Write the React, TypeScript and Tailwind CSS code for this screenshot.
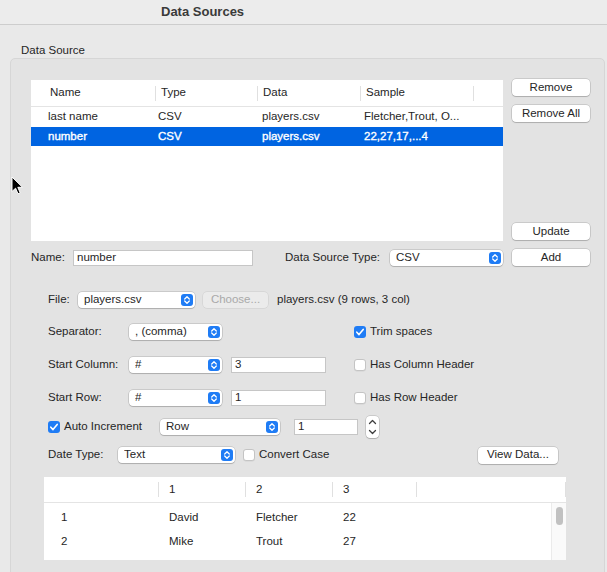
import React from "react";

const btnShadow =
  "shadow-[0_0_0_0.5px_rgba(0,0,0,0.22),0_1px_1px_rgba(0,0,0,0.14)]";

function Arrow() {
  return (
    <svg width="12" height="12" viewBox="0 0 12 12" className="shrink-0">
      <rect x="0" y="0" width="12" height="12" rx="3" fill="#1f7cf5" />
      <path d="M3.7 5 L6 2.8 L8.3 5" stroke="white" strokeWidth="1.3" fill="none" strokeLinecap="round" strokeLinejoin="round" />
      <path d="M3.7 7 L6 9.2 L8.3 7" stroke="white" strokeWidth="1.3" fill="none" strokeLinecap="round" strokeLinejoin="round" />
    </svg>
  );
}

function Popup({ text, w }: { text: string; w: string }) {
  return (
    <div className={`${w} h-[16px] shrink-0 bg-white rounded-[4px] ${btnShadow} flex items-center pl-[6px] pr-[2px]`}>
      <span className="flex-1 truncate leading-none">{text}</span>
      <Arrow />
    </div>
  );
}

function Button({ text, w, cls = "" }: { text: string; w: string; cls?: string }) {
  return (
    <div className={`${w} h-[17px] shrink-0 bg-white rounded-[4px] ${btnShadow} flex items-center justify-center leading-none ${cls}`}>
      {text}
    </div>
  );
}

function Check({ on }: { on: boolean }) {
  if (on)
    return (
      <svg width="12" height="12" viewBox="0 0 12 12" className="shrink-0">
        <rect x="0" y="0" width="12" height="12" rx="3" fill="#1f7cf5" />
        <path d="M2.8 6.2 L5 8.6 L9.2 3.4" stroke="white" strokeWidth="1.6" fill="none" strokeLinecap="round" strokeLinejoin="round" />
      </svg>
    );
  return (
    <div className="w-[12px] h-[12px] shrink-0 rounded-[3px] bg-white border border-[#c4c4c4] shadow-[0_0.5px_0.5px_rgba(0,0,0,0.08)]" />
  );
}

function Input({ text, w }: { text: string; w: string }) {
  return (
    <div className={`${w} h-[16px] shrink-0 bg-white border border-[#c6c6c6] flex items-center pl-[3px] leading-none`}>
      {text}
    </div>
  );
}

function HeadSep() {
  return <div className="w-px h-[15px] bg-[#e0e0e0] shrink-0" />;
}

export default function App() {
  return (
    <div className="relative w-[607px] h-[572px] overflow-hidden bg-[#e9e9e9] text-[#262626] text-[11.5px] flex flex-col font-['Liberation_Sans',Arial,sans-serif]">
      {/* Title bar */}
      <div className="h-[25px] shrink-0 border-b border-[#cdcdcd] bg-[#ececec] flex items-center pl-[161px] text-[13px] font-bold text-[#3a3a3a]">
        Data Sources
      </div>

      <div className="pl-[21px] mt-[18px] h-[14px] leading-[14px] shrink-0">Data Source</div>

      {/* Group box */}
      <div className="ml-[10px] mr-[2px] mt-[1px] h-[600px] shrink-0 bg-[#e3e3e3] border border-[#d6d6d6] rounded-[5px] flex flex-col">
        {/* Top section */}
        <div className="flex shrink-0">
          <div className="ml-[20px] pt-[21px] w-[472px] flex flex-col">
            {/* Sources table */}
            <div className="h-[161px] bg-white flex flex-col">
              <div className="h-[27px] border-b border-[#e4e4e4] flex items-center">
                <div className="w-[124px] pl-[19px]">Name</div>
                <div className="w-[102px] flex items-center"><HeadSep /><span className="pl-[5px]">Type</span></div>
                <div className="w-[103px] flex items-center"><HeadSep /><span className="pl-[5px]">Data</span></div>
                <div className="w-[113px] flex items-center"><HeadSep /><span className="pl-[5px]">Sample</span></div>
                <div className="flex-1 flex items-center"><HeadSep /></div>
              </div>
              <div className="h-[20px] flex items-center">
                <div className="w-[124px] pl-[17px]">last name</div>
                <div className="w-[102px] pl-[3px]">CSV</div>
                <div className="w-[103px] pl-[5px]">players.csv</div>
                <div className="w-[113px] pl-[4px] whitespace-nowrap">Fletcher,Trout, O...</div>
              </div>
              <div className="h-[19px] flex items-center bg-[#0064e1] text-white [-webkit-text-stroke:0.35px_white]">
                <div className="w-[124px] pl-[17px]">number</div>
                <div className="w-[102px] pl-[3px]">CSV</div>
                <div className="w-[103px] pl-[5px]">players.csv</div>
                <div className="w-[113px] pl-[4px]">22,27,17,...4</div>
              </div>
            </div>
            {/* Name row */}
            <div className="mt-[9px] h-[16px] flex items-center">
              <div className="w-[42px] shrink-0">Name:</div>
              <Input text="number" w="w-[180px]" />
              <div className="ml-[32px] w-[105px] shrink-0 whitespace-nowrap">Data Source Type:</div>
              <Popup text="CSV" w="w-[113px]" />
            </div>
          </div>
          <div className="ml-[9px] pt-[20px] w-[78px] flex flex-col">
            <Button text="Remove" w="w-[78px]" />
            <Button text="Remove All" w="w-[78px]" cls="mt-[9px]" />
            <Button text="Update" w="w-[78px]" cls="mt-[101px]" />
            <Button text="Add" w="w-[78px]" cls="mt-[9px]" />
          </div>
        </div>

        {/* File row */}
        <div className="mt-[26px] h-[16px] pl-[37px] flex items-center shrink-0">
          <div className="w-[30px] shrink-0">File:</div>
          <Popup text="players.csv" w="w-[117px]" />
          <div className="ml-[8px] w-[65px] h-[16px] shrink-0 rounded-[4px] bg-[#ebebeb] shadow-[0_0_0_0.5px_rgba(0,0,0,0.1)] flex items-center justify-center text-[#a9a9a9] leading-none">
            Choose...
          </div>
          <div className="ml-[9px] whitespace-nowrap">players.csv (9 rows, 3 col)</div>
        </div>

        {/* Separator row */}
        <div className="mt-[16px] h-[16px] pl-[37px] flex items-center shrink-0">
          <div className="w-[81px] shrink-0">Separator:</div>
          <Popup text=", (comma)" w="w-[93px]" />
          <div className="ml-[132px] flex items-center gap-[4px]">
            <Check on={true} />
            <span>Trim spaces</span>
          </div>
        </div>

        {/* Start Column */}
        <div className="mt-[17px] h-[16px] pl-[37px] flex items-center shrink-0">
          <div className="w-[81px] shrink-0 whitespace-nowrap">Start Column:</div>
          <Popup text="#" w="w-[93px]" />
          <div className="ml-[9px]"><Input text="3" w="w-[95px]" /></div>
          <div className="ml-[28px] flex items-center gap-[4px]">
            <Check on={false} />
            <span>Has Column Header</span>
          </div>
        </div>

        {/* Start Row */}
        <div className="mt-[17px] h-[16px] pl-[37px] flex items-center shrink-0">
          <div className="w-[81px] shrink-0">Start Row:</div>
          <Popup text="#" w="w-[93px]" />
          <div className="ml-[9px]"><Input text="1" w="w-[95px]" /></div>
          <div className="ml-[28px] flex items-center gap-[4px]">
            <Check on={false} />
            <span>Has Row Header</span>
          </div>
        </div>

        {/* Auto Increment */}
        <div className="mt-[10px] h-[22px] pl-[37px] flex items-center shrink-0">
          <Check on={true} />
          <div className="ml-[4px] w-[96px] shrink-0 whitespace-nowrap">Auto Increment</div>
          <Popup text="Row" w="w-[120px]" />
          <div className="ml-[14px]"><Input text="1" w="w-[64px]" /></div>
          <div className={`ml-[8px] w-[13px] h-[22px] shrink-0 bg-white rounded-[4px] ${btnShadow} flex flex-col items-center justify-between py-[3px]`}>
            <svg width="9" height="6" viewBox="0 0 9 6">
              <path d="M1.5 4.5 L4.5 1.5 L7.5 4.5" stroke="#3d3d3d" strokeWidth="1.3" fill="none" strokeLinecap="round" strokeLinejoin="round" />
            </svg>
            <svg width="9" height="6" viewBox="0 0 9 6">
              <path d="M1.5 1.5 L4.5 4.5 L7.5 1.5" stroke="#3d3d3d" strokeWidth="1.3" fill="none" strokeLinecap="round" strokeLinejoin="round" />
            </svg>
          </div>
        </div>

        {/* Date Type */}
        <div className="mt-[9px] h-[16px] pl-[37px] flex items-center shrink-0">
          <div className="w-[70px] shrink-0">Date Type:</div>
          <Popup text="Text" w="w-[117px]" />
          <div className="ml-[8px]"><Check on={false} /></div>
          <div className="ml-[4px] w-[219px] shrink-0">Convert Case</div>
          <Button text="View Data..." w="w-[80px]" cls="h-[16px]" />
        </div>

        {/* Preview table */}
        <div className="mt-[14px] ml-[33px] w-[522px] h-[83px] bg-white flex flex-col shrink-0">
          <div className="h-[26px] border-b border-[#e4e4e4] flex items-center shrink-0">
            <div className="w-[114px]" />
            <div className="w-[87px] flex items-center"><HeadSep /><span className="pl-[10px]">1</span></div>
            <div className="w-[87px] flex items-center"><HeadSep /><span className="pl-[10px]">2</span></div>
            <div className="w-[84px] flex items-center"><HeadSep /><span className="pl-[10px]">3</span></div>
            <div className="flex-1 flex items-center"><HeadSep /></div>
            <HeadSep />
          </div>
          <div className="flex flex-1 min-h-0">
            <div className="flex-1 pt-[3px] flex flex-col">
              {[
                ["1", "David", "Fletcher", "22"],
                ["2", "Mike", "Trout", "27"],
              ].map((r) => (
                <div key={r[0]} className="h-[24px] flex items-center">
                  <div className="w-[114px] pl-[17px]">{r[0]}</div>
                  <div className="w-[87px] pl-[11px]">{r[1]}</div>
                  <div className="w-[87px] pl-[11px]">{r[2]}</div>
                  <div className="w-[84px] pl-[11px]">{r[3]}</div>
                </div>
              ))}
            </div>
            <div className="w-[15px] shrink-0 border-l border-[#ebebeb] bg-[#fafafa] flex justify-center pt-[4px]">
              <div className="w-[7px] h-[18px] rounded-full bg-[#c1c1c1]" />
            </div>
          </div>
        </div>
      </div>

      {/* Mouse cursor overlay */}
      <svg className="absolute left-[11px] top-[176px]" width="13" height="20" viewBox="0 0 13 20">
        <path d="M1 1 L1 15.5 L4.6 12.2 L7 17.8 L9.2 16.8 L6.8 11.3 L11.5 11.3 Z" fill="black" stroke="white" strokeWidth="1" strokeLinejoin="round" />
      </svg>
    </div>
  );
}
